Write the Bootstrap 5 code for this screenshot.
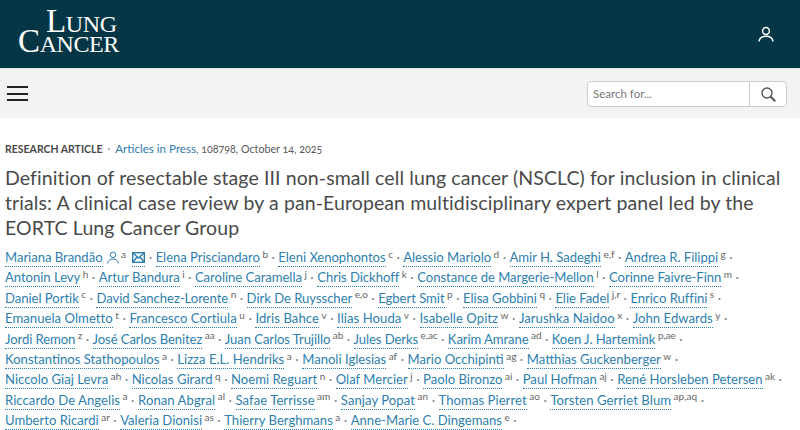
<!doctype html>
<html lang="en"><head><meta charset="utf-8">
<link href="https://cdn.jsdelivr.net/npm/bootstrap@5.3.0/dist/css/bootstrap.min.css" rel="stylesheet">
<style>
html,body{height:430px;overflow:hidden;background:#fff}
body{font-family:"Lato",sans-serif;color:#4a4a4a}
.top-bar{height:68px;background:#043645;padding:0 26px 0 18px}
.logo-mark{font-family:"Liberation Serif",serif;color:#fff;font-size:33px;padding-top:8px;letter-spacing:-.4px}
.logo-mark div{white-space:nowrap;height:20px;line-height:26px}
.logo-mark .l1{padding-left:28px}
.logo-mark span{font-size:24px}
.tool-bar{height:50px;background:#f3f3f3;padding:12px 13px 0 7px;border-top:1px solid #e3e6e7}
.burger{width:21px;height:15px;border-top:2px solid #222;border-bottom:2px solid #222;position:relative;margin-top:5px}
.burger::after{content:"";position:absolute;left:0;right:0;top:4.5px;height:2px;background:#222}
.search-box{width:200px;height:26px;background:#fff;border:1px solid #ccc;border-radius:4px}
.search-box .ph{flex:1;font-size:11.5px;color:#777;padding:4px 5px;line-height:16px}
.search-box .go{width:37px;border-left:1px solid #ccc;padding-top:5px}
.main-area{padding:24px 5px 0}
.meta-line{font-size:10.7px;line-height:14px;white-space:nowrap;margin-bottom:9px;font-variant-numeric:oldstyle-nums;color:#5a5a5a}
.meta-line b{font-weight:700;color:#4a4a4a;font-size:10.5px}
.meta-line .dot{color:#888;margin:0 5px}
.meta-line .press{color:#2f7cab;font-size:11.6px}
.art-title{font-size:19.5px;line-height:25px;font-weight:400;color:#4a4a4a;margin:0 0 7px;white-space:nowrap;letter-spacing:.1px}
.au-list{font-size:13.1px;line-height:20.4px;white-space:nowrap;color:#888}
.au-list a,.au-list a:not([href]):not([class]){color:#2e7fae;text-decoration:none;border-bottom:1px dotted #2e7fae;padding-bottom:1px}
.au-list sup{font-size:10px;color:#666;top:-.45em;margin-left:2.500px}
.au-list i{font-style:normal;margin:0 3.500px;color:#888}
.au-list svg{vertical-align:-1px}
.au-list .who{margin-left:4px;vertical-align:-2px}
.au-list .mail-link{margin-left:3px}
.au-list .tight-a{letter-spacing:-.04px}
.au-list .tight-b{letter-spacing:-.09px}
.au-list .loose-a{letter-spacing:.05px}
</style></head><body>
<header class="top-bar d-flex justify-content-between align-items-center">
<div class="logo-mark align-self-start"><div class="l1">L<span>UNG</span></div><div>C<span>ANCER</span></div></div>
<svg width="16" height="16" viewBox="0 0 16 16" fill="none" stroke="#fff" stroke-width="1.5"><circle cx="8" cy="5" r="3.400"/><path d="M1 15.500c.4-3.500 3-5.200 7-5.200s6.600 1.700 7 5.200"/></svg>
</header>
<div class="tool-bar d-flex justify-content-between">
<div class="burger"></div>
<div class="search-box d-flex"><div class="ph">Search for...</div><div class="go"><svg class="d-block mx-auto" width="15" height="15" viewBox="0 0 15 15" fill="none" stroke="#555" stroke-width="1.400"><circle cx="6" cy="6" r="5"/><path d="M9.700 9.700l4.500 4.500" stroke-width="2"/></svg></div></div>
</div>
<main class="main-area">
<div class="meta-line"><b>RESEARCH ARTICLE</b><span class="dot">·</span><span class="press">Articles in Press</span>, 108798, October 14, 2025</div>
<h1 class="art-title">Definition of resectable stage III non-small cell lung cancer (NSCLC) for inclusion in clinical<br>trials: A clinical case review by a pan-European multidisciplinary expert panel led by the<br>EORTC Lung Cancer Group</h1>
<div class="au-list">
<div class="tight-a"><a>Mariana Brandão</a><svg class="who" width="12" height="13" viewBox="0 0 12 13" fill="none" stroke="#2e7fae"><circle cx="6" cy="3.800" r="2.800"/><path d="M.6 12.500c.3-3 2.400-4.500 5.400-4.500s5.100 1.500 5.400 4.500"/></svg><sup>a</sup> <a class="mail-link"><svg width="13" height="11" viewBox="0 0 13 11" fill="none" stroke="#2e7fae" stroke-width="1.400"><rect x=".7" y=".7" width="11.600" height="9.600"/><path d="M1 1l5.500 5L12 1M1 10l4-5M12 10L8 5"/></svg></a><i>·</i><a>Elena Prisciandaro</a><sup>b</sup><i>·</i><a>Eleni Xenophontos</a><sup>c</sup><i>·</i><a>Alessio Mariolo</a><sup>d</sup><i>·</i><a>Amir H. Sadeghi</a><sup>e,f</sup><i>·</i><a>Andrea R. Filippi</a><sup>g</sup><i>·</i></div>
<div class="tight-a"><a>Antonin Levy</a><sup>h</sup><i>·</i><a>Artur Bandura</a><sup>i</sup><i>·</i><a>Caroline Caramella</a><sup>j</sup><i>·</i><a>Chris Dickhoff</a><sup>k</sup><i>·</i><a>Constance de Margerie-Mellon</a><sup>l</sup><i>·</i><a>Corinne Faivre-Finn</a><sup>m</sup><i>·</i></div>
<div class="tight-a"><a>Daniel Portik</a><sup>c</sup><i>·</i><a>David Sanchez-Lorente</a><sup>n</sup><i>·</i><a>Dirk De Ruysscher</a><sup>e,o</sup><i>·</i><a>Egbert Smit</a><sup>p</sup><i>·</i><a>Elisa Gobbini</a><sup>q</sup><i>·</i><a>Elie Fadel</a><sup>j,r</sup><i>·</i><a>Enrico Ruffini</a><sup>s</sup><i>·</i></div>
<div class="loose-a"><a>Emanuela Olmetto</a><sup>t</sup><i>·</i><a>Francesco Cortiula</a><sup>u</sup><i>·</i><a>Idris Bahce</a><sup>v</sup><i>·</i><a>Ilias Houda</a><sup>v</sup><i>·</i><a>Isabelle Opitz</a><sup>w</sup><i>·</i><a>Jarushka Naidoo</a><sup>x</sup><i>·</i><a>John Edwards</a><sup>y</sup><i>·</i></div>
<div class="tight-b"><a>Jordi Remon</a><sup>z</sup><i>·</i><a>José Carlos Benitez</a><sup>aa</sup><i>·</i><a>Juan Carlos Trujillo</a><sup>ab</sup><i>·</i><a>Jules Derks</a><sup>e,ac</sup><i>·</i><a>Karim Amrane</a><sup>ad</sup><i>·</i><a>Koen J. Hartemink</a><sup>p,ae</sup><i>·</i></div>
<div><a>Konstantinos Stathopoulos</a><sup>a</sup><i>·</i><a>Lizza E.L. Hendriks</a><sup>a</sup><i>·</i><a>Manoli Iglesias</a><sup>af</sup><i>·</i><a>Mario Occhipinti</a><sup>ag</sup><i>·</i><a>Matthias Guckenberger</a><sup>w</sup><i>·</i></div>
<div><a>Niccolo Giaj Levra</a><sup>ah</sup><i>·</i><a>Nicolas Girard</a><sup>q</sup><i>·</i><a>Noemi Reguart</a><sup>n</sup><i>·</i><a>Olaf Mercier</a><sup>j</sup><i>·</i><a>Paolo Bironzo</a><sup>ai</sup><i>·</i><a>Paul Hofman</a><sup>aj</sup><i>·</i><a>René Horsleben Petersen</a><sup>ak</sup><i>·</i></div>
<div class="loose-a"><a>Riccardo De Angelis</a><sup>a</sup><i>·</i><a>Ronan Abgral</a><sup>al</sup><i>·</i><a>Safae Terrisse</a><sup>am</sup><i>·</i><a>Sanjay Popat</a><sup>an</sup><i>·</i><a>Thomas Pierret</a><sup>ao</sup><i>·</i><a>Torsten Gerriet Blum</a><sup>ap,aq</sup><i>·</i></div>
<div><a>Umberto Ricardi</a><sup>ar</sup><i>·</i><a>Valeria Dionisi</a><sup>as</sup><i>·</i><a>Thierry Berghmans</a><sup>a</sup><i>·</i><a>Anne-Marie C. Dingemans</a><sup>e</sup><i>·</i></div>
</div>
</main>
<script src="https://cdn.jsdelivr.net/npm/bootstrap@5.3.0/dist/js/bootstrap.bundle.min.js"></script>
</body></html>
